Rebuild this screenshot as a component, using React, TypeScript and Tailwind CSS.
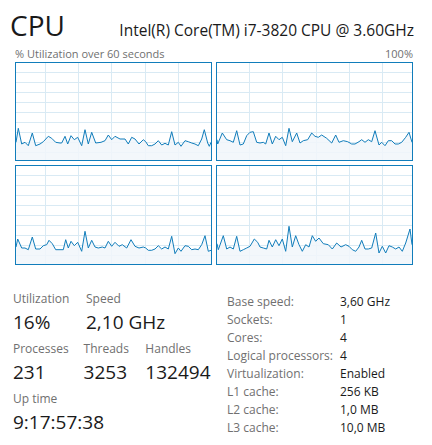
import React from "react";

type Pt = [number, number];

const P1: Pt[] = [[0,70],[10,28],[20,75],[30,70],[40,80],[52,42],[62,80],[75,75],[85,68],[100,52],[110,58],[122,70],[135,72],[140,72],[150,52],[158,75],[168,50],[178,62],[188,55],[200,80],[210,32],[220,75],[230,40],[242,72],[258,70],[270,65],[280,48],[290,62],[300,52],[315,60],[330,60],[340,75],[350,55],[360,60],[372,75],[385,62],[392,68],[400,80],[410,80],[420,75],[430,65],[440,78],[450,73],[460,78],[470,38],[480,78],[490,70],[498,82],[510,65],[520,68],[530,72],[540,75],[550,80],[560,60],[568,32],[578,72],[583,82],[592,70]];
const P2: Pt[] = [[0,62],[8,75],[22,42],[35,62],[45,65],[55,70],[65,35],[75,78],[85,75],[95,50],[105,40],[115,38],[125,70],[135,72],[145,70],[152,75],[162,42],[172,75],[182,52],[192,62],[202,55],[212,80],[222,28],[232,68],[245,42],[255,72],[265,65],[278,62],[290,42],[300,52],[310,55],[320,48],[335,58],[350,72],[362,48],[372,70],[385,65],[398,68],[410,75],[420,75],[432,68],[440,62],[450,70],[460,62],[470,68],[480,35],[492,78],[500,70],[510,80],[520,65],[530,65],[540,75],[550,75],[560,70],[572,55],[582,40],[592,70]];
const P3: Pt[] = [[0,72],[8,48],[20,75],[30,75],[40,80],[52,42],[62,78],[75,78],[85,68],[95,65],[102,52],[112,62],[122,80],[135,80],[145,80],[152,50],[160,75],[168,55],[178,68],[188,58],[200,85],[210,25],[220,75],[230,52],[240,72],[250,75],[262,72],[270,75],[280,55],[290,70],[300,58],[312,70],[322,65],[335,75],[348,50],[360,70],[372,75],[385,72],[392,75],[400,82],[410,82],[420,78],[430,68],[440,78],[450,72],[460,78],[470,40],[480,92],[490,75],[498,85],[510,68],[520,70],[530,80],[540,78],[550,80],[560,65],[570,38],[580,85],[592,82]];
const P4: Pt[] = [[0,62],[10,80],[25,38],[35,78],[45,72],[55,78],[65,40],[75,85],[85,80],[95,75],[105,70],[118,48],[128,58],[135,72],[145,75],[155,78],[162,52],[172,72],[182,50],[192,68],[202,48],[212,85],[222,10],[232,72],[242,38],[252,65],[262,85],[272,65],[282,72],[292,38],[302,55],[312,45],[325,62],[340,65],[352,78],[365,60],[378,72],[392,65],[402,70],[412,80],[422,85],[432,72],[440,52],[450,78],[460,78],[470,75],[482,30],[492,90],[502,70],[512,90],[522,68],[532,72],[542,78],[552,72],[562,85],[572,60],[585,18],[592,65]];

const W = 195;

function Graph({ pts, dx, dy, h, vlines }: { pts: Pt[]; dx: number; dy: number; h: number; vlines: number[] }) {
  const mapped = pts.map(([x, y]) => [Math.max(0, Math.min(W, x / 3 + dx)), y / 3 + dy] as Pt);
  mapped[0][0] = 0;
  mapped[mapped.length - 1][0] = W;
  const line = mapped.map(([x, y]) => `${x.toFixed(1)},${y.toFixed(1)}`).join(" ");
  const area = `0,${h} ${line} ${W},${h}`;
  const hl: number[] = [];
  for (let k = 0; k < 9; k++) hl.push(9.5 + 10 * k);
  return (
    <div className="border border-[#117dbb] bg-white">
      <svg width={W} height={h} viewBox={`0 0 ${W} ${h}`} className="block">
        {hl.map((y) => (
          <line key={"h" + y} x1={0} x2={W} y1={y} y2={y} stroke="#d9eaf4" strokeWidth={1} />
        ))}
        {vlines.map((x) => (
          <line key={"v" + x} x1={x} x2={x} y1={0} y2={h} stroke="#d9eaf4" strokeWidth={1} />
        ))}
        <polygon points={area} fill="#f1f6fa" fillOpacity={0.85} />
        <polyline points={line} fill="none" stroke="#117dbb" strokeWidth={1} strokeLinejoin="round" />
      </svg>
    </div>
  );
}

const VA = [29.5, 62.5, 95.5, 129.5, 162.5];
const VB = [32.5, 65.5, 99.5, 132.5, 165.5];

function Stat({ label, value, w }: { label: string; value: string; w: string }) {
  return (
    <div className={w}>
      <div className="text-[12px] leading-[16px] text-[#707070] whitespace-nowrap">{label}</div>
      <div className="text-[19px] leading-[26px] text-[#1a1a1a] mt-[2px] whitespace-nowrap">{value}</div>
    </div>
  );
}

const rows: [string, string][] = [
  ["Base speed:", "3,60 GHz"],
  ["Sockets:", "1"],
  ["Cores:", "4"],
  ["Logical processors:", "4"],
  ["Virtualization:", "Enabled"],
  ["L1 cache:", "256 KB"],
  ["L2 cache:", "1,0 MB"],
  ["L3 cache:", "10,0 MB"],
];

export default function App() {
  return (
    <div className="w-[432px] h-[445px] bg-white overflow-hidden" style={{ fontFamily: '"Open Sans", "Noto Sans", sans-serif' }}>
      <div className="flex items-baseline justify-between pl-[10px] pr-[18px] pt-[5px] h-[42px]">
        <div className="text-[28px] leading-[40px] text-[#1a1a1a]">CPU</div>
        <div className="text-[15.5px] leading-[40px] text-[#1a1a1a] whitespace-nowrap">Intel(R) Core(TM) i7-3820 CPU @ 3.60GHz</div>
      </div>
      <div className="flex justify-between px-[15px] mr-[4px] mt-[3px] text-[11px] leading-[17px] text-[#707070]">
        <span>% Utilization over 60 seconds</span>
        <span>100%</span>
      </div>
      <div className="pl-[15px] grid grid-cols-[197px_197px] gap-x-[4px] gap-y-[4px] w-fit">
        <Graph pts={P1} dx={-1} dy={56} h={97} vlines={VA} />
        <Graph pts={P2} dx={-2} dy={56} h={97} vlines={VB} />
        <Graph pts={P3} dx={-1} dy={57} h={98} vlines={VA} />
        <Graph pts={P4} dx={-2} dy={57} h={98} vlines={VB} />
      </div>
      <div className="flex mt-[26px]">
        <div className="pl-[13px] w-[214px] flex flex-col gap-[6px]">
          <div className="flex">
            <Stat label="Utilization" value="16%" w="w-[73px]" />
            <Stat label="Speed" value="2,10 GHz" w="w-[62px]" />
          </div>
          <div className="flex">
            <Stat label="Processes" value="231" w="w-[72px]" />
            <Stat label="Threads" value="3253" w="w-[63px]" />
            <Stat label="Handles" value="132494" w="w-[70px]" />
          </div>
          <div className="flex">
            <Stat label="Up time" value="9:17:57:38" w="w-[120px]" />
          </div>
        </div>
        <div className="pl-[13px] pt-[2px]">
          {rows.map(([k, v]) => (
            <div key={k} className="flex h-[18px] items-center text-[12px] whitespace-nowrap">
              <div className="w-[113px] text-[#707070]">{k}</div>
              <div className="text-[#1a1a1a]">{v}</div>
            </div>
          ))}
        </div>
      </div>
    </div>
  );
}
